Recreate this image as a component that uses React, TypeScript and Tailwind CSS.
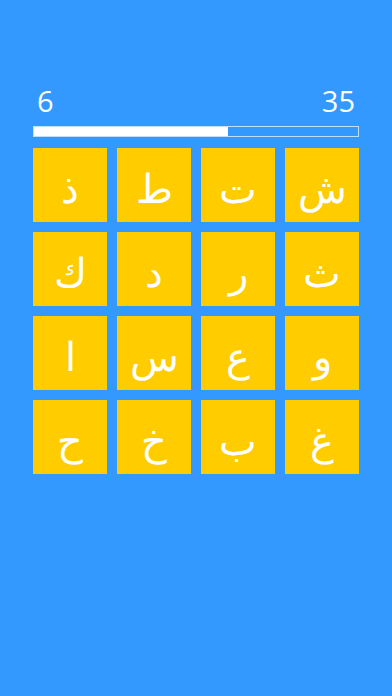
const LETTERS = [
  "ذ", "ط", "ت", "ش",
  "ك", "د", "ر", "ث",
  "ا", "س", "ع", "و",
  "ح", "خ", "ب", "غ",
];

export default function App() {
  const found = 6;
  const total = 35;
  const progress = 0.6;

  return (
    <div className="h-[696px] w-[392px] bg-[#3399ff] px-[33px] pt-[86px]">
      <div className="flex items-center justify-between px-[4px] font-['Open_Sans',sans-serif] text-[29px] leading-[30px] text-white">
        <span>{found}</span>
        <span>{total}</span>
      </div>
      <div className="mt-[10px] h-[11px] w-full border border-[#bfe0ff]">
        <div className="h-full bg-white" style={{ width: `${progress * 100}%` }} />
      </div>
      <div className="mt-[11px] grid grid-cols-4 gap-[10px]">
        {LETTERS.map((l, i) => (
          <div
            key={i}
            className="flex h-[74px] items-center justify-center bg-[#ffcc00] pt-[8px] font-['DejaVu_Sans',sans-serif] text-[40px] font-light text-white"
          >
            {l}
          </div>
        ))}
      </div>
    </div>
  );
}
